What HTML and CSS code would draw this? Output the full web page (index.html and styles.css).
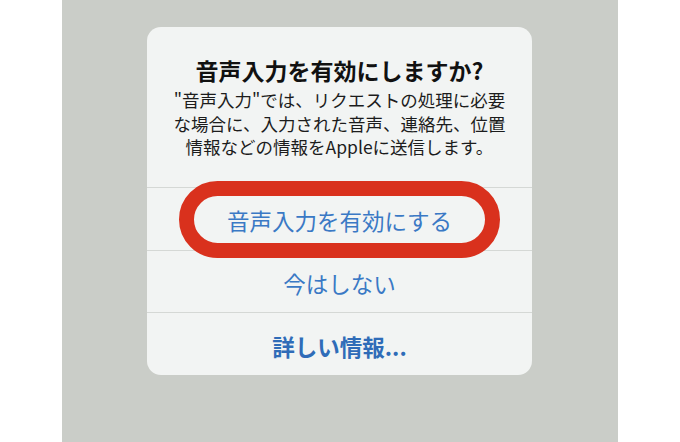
FILE: index.html
```html
<!DOCTYPE html>
<html lang="ja">
<head>
<meta charset="utf-8">
<link rel="stylesheet" href="styles.css">
</head>
<body>
<div class="page">
  <div class="backdrop">
    <div class="alert">
      <div class="header">
        <div class="title">音声入力を有効にしますか?</div>
        <div class="message">"音声入力"では、リクエストの処理に必要<br>な場合に、入力された音声、連絡先、位置<br>情報などの情報をAppleに送信します。</div>
      </div>
      <div class="action">音声入力を有効にする</div>
      <div class="action">今はしない</div>
      <div class="action bold">詳しい情報...</div>
      <div class="highlight"></div>
    </div>
  </div>
</div>
</body>
</html>
```

FILE: styles.css
```css
html, body {
  margin: 0;
  padding: 0;
  background: #ffffff;
}
.page {
  width: 680px;
  height: 442px;
  display: flex;
  font-family: "Noto Sans CJK JP", "Noto Sans", sans-serif;
}
.backdrop {
  margin-left: 62px;
  width: 556px;
  height: 442px;
  background: #cacdc8;
  padding: 27px 0 0 85px;
  box-sizing: border-box;
}
.alert {
  position: relative;
  width: 385px;
  height: 348px;
  background: #f2f4f3;
  border-radius: 14px;
  display: flex;
  flex-direction: column;
}
.header {
  height: 160px;
  box-sizing: border-box;
  padding-top: 28px;
  text-align: center;
}
.title {
  font-size: 23px;
  font-weight: 700;
  line-height: 30px;
  color: #111111;
}
.message {
  margin-top: 3px;
  font-size: 17.5px;
  line-height: 23.5px;
  color: #1c1c1c;
  white-space: nowrap;
}
.action {
  flex: 1;
  border-top: 1px solid #d5d8d5;
  display: flex;
  align-items: center;
  justify-content: center;
  padding-top: 3px;
  font-size: 22.5px;
  color: #3a79c5;
}
.action.bold {
  font-weight: 700;
  color: #2f6cb8;
}
.highlight {
  position: absolute;
  left: 32px;
  top: 154px;
  width: 321px;
  height: 77px;
  box-sizing: border-box;
  border: 15px solid #d9311d;
  border-radius: 40px;
}
```
